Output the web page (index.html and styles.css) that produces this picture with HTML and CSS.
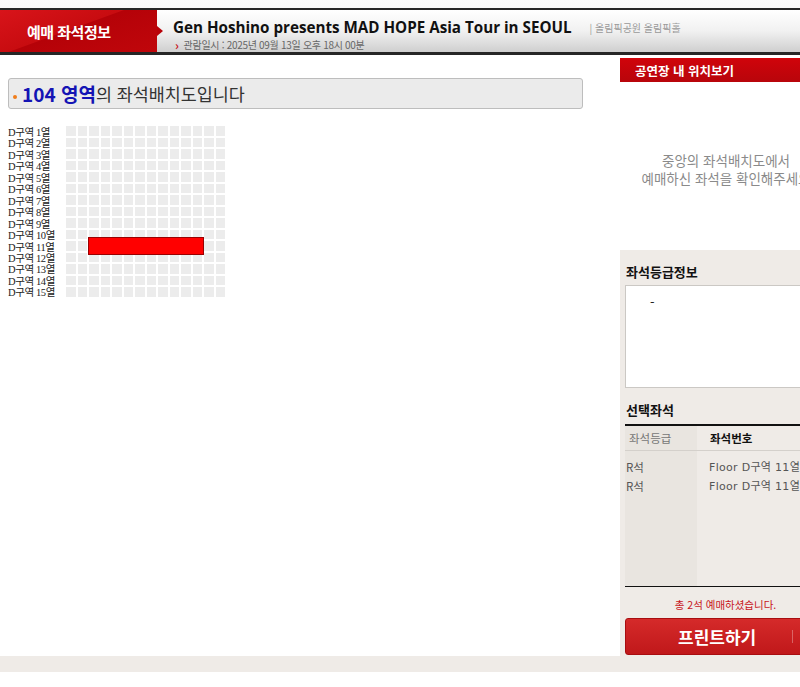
FILE: index.html
```html
<!DOCTYPE html>
<html lang="ko">
<head>
  <meta charset="UTF-8">
  <title>예매 좌석정보</title>
  <link rel="stylesheet" href="styles.css">
</head>
<body>
  <div class="topbar">
    <div class="header">
      <div class="header-tab">예매 좌석정보</div>
      <div class="header-info">
        <div class="show-title">
          <strong>Gen Hoshino presents MAD HOPE Asia Tour in SEOUL</strong>
          <span class="venue">| 올림픽공원 올림픽홀</span>
        </div>
        <div class="show-date"><span class="chev">&rsaquo;</span>관람일시 : 2025년 09월 13일 오후 18시 00분</div>
      </div>
    </div>
  </div>

  <div class="page">
    <!-- seat map -->
    <div class="map-area">
      <div class="area-title">
        <span class="dot"></span><span class="area-no">104 영역</span>의 좌석배치도입니다
      </div>

      <div class="seat-wrap">
        <div class="row-labels" id="rowLabels"></div>
        <div class="seat-grid" id="seatGrid">
          <div class="seat-pick"></div>
        </div>
      </div>
    </div>

    <!-- right panel -->
    <aside class="side">
      <div class="side-tab">공연장 내 위치보기</div>
      <div class="side-guide">
        <p>중앙의 좌석배치도에서</p>
        <p>예매하신 좌석을 확인해주세요</p>
      </div>
      <div class="side-body">
        <h3>좌석등급정보</h3>
        <div class="grade-box">-</div>

        <h3 class="picked-title">선택좌석</h3>
        <div class="seat-table">
          <div class="col col-grade">
            <div class="th">좌석등급</div>
            <div class="td">R석</div>
            <div class="td">R석</div>
          </div>
          <div class="col col-no">
            <div class="th">좌석번호</div>
            <div class="td">Floor D구역 11열</div>
            <div class="td">Floor D구역 11열</div>
          </div>
        </div>
        <div class="total">총 2석 예매하셨습니다.</div>
        <div class="print-btn">
          <span class="print-label">프린트하기</span>
          <span class="btn-sep"></span>
          <span class="btn-close">X</span>
        </div>
      </div>
    </aside>
  </div>
  <div class="footer-band"></div>

  <script>
    const labels = document.getElementById('rowLabels');
    const grid = document.getElementById('seatGrid');

    for (let r = 1; r <= 15; r++) {
      const label = document.createElement('div');
      label.textContent = 'D구역 ' + r + '열';
      labels.appendChild(label);
      for (let c = 0; c < 14; c++) {
        const seat = document.createElement('span');
        seat.className = 'seat';
        grid.appendChild(seat);
      }
    }
  </script>
</body>
</html>
```

FILE: styles.css
```css
* {
  box-sizing: border-box;
}

html, body {
  overflow: hidden;
}

body {
  margin: 0;
  width: 800px;
  height: 687px;
  background: #fff;
  font-family: "Noto Sans CJK KR", "Noto Sans", sans-serif;
  color: #222;
}

/* header */
.topbar {
  padding-top: 8px;
  background: linear-gradient(to bottom, #fafafa, #f0f0f0);
}

.header {
  display: flex;
  height: 47px;
  border-top: 2px solid #262626;
  border-bottom: 3px solid #262626;
}

.header-tab {
  position: relative;
  width: 157px;
  flex-shrink: 0;
  padding-left: 27px;
  display: flex;
  align-items: center;
  color: #fff;
  font-weight: bold;
  font-size: 15px;
  letter-spacing: -0.5px;
  background: linear-gradient(160deg, #d8141a 0%, #c80c10 45%, #b50208 46%, #c0060b 100%);
}

.header-tab::after {
  content: "";
  position: absolute;
  right: -6px;
  top: 16px;
  border-left: 6px solid #b80208;
  border-top: 5px solid transparent;
  border-bottom: 5px solid transparent;
  z-index: 1;
}

.header-info {
  flex: 1;
  padding: 6px 0 0 16px;
  background: linear-gradient(to bottom, #ffffff 0%, #f1f1f1 50%, #cfcfcf 100%);
  white-space: nowrap;
}

.show-title {
  display: flex;
  align-items: center;
  height: 22px;
}

.show-title strong {
  font-family: "Open Sans", "Noto Sans CJK KR", sans-serif;
  font-size: 15.2px;
  font-weight: bold;
  color: #111;
}

.venue {
  margin-left: 18px;
  font-size: 10px;
  color: #999;
}

.show-date {
  display: flex;
  align-items: center;
  height: 14px;
  padding-left: 2px;
  font-size: 10px;
  line-height: 12px;
  color: #666;
  letter-spacing: -0.3px;
}

.chev {
  color: #c8151b;
  font-weight: bold;
  font-size: 12px;
  line-height: 12px;
  margin-right: 5px;
}

/* main */
.page {
  display: flex;
  height: 601px;
}

.map-area {
  width: 620px;
  flex-shrink: 0;
}

.area-title {
  margin: 23px 0 0 8px;
  width: 575px;
  height: 31px;
  padding-left: 4px;
  display: flex;
  align-items: center;
  border: 1px solid #bdbdbd;
  border-radius: 3px;
  background: #ebebeb;
  font-size: 17.4px;
  color: #333;
}

.dot {
  width: 4px;
  height: 4px;
  margin: 6px 5px 0 0;
  border-radius: 50%;
  background: #f07d1a;
}

.area-no {
  color: #1414b4;
  font-weight: bold;
  font-size: 19px;
}

.seat-wrap {
  display: flex;
  margin-top: 17px;
}

.row-labels {
  width: 66px;
  padding: 1px 0 0 8px;
  font-family: "Liberation Serif", "Noto Sans CJK KR", serif;
  font-size: 10.5px;
  line-height: 11.45px;
  color: #222;
  letter-spacing: -0.4px;
}

.seat-grid {
  position: relative;
  display: grid;
  grid-template-columns: repeat(14, 9.5px);
  grid-auto-rows: 9.5px;
  gap: 2px;
}

.seat {
  background: #ececec;
}

.seat-pick {
  position: absolute;
  left: 22px;
  top: 111px;
  width: 116px;
  height: 18px;
  background: #ff0000;
  border: 1px solid #9a0000;
}

/* right side */
.side {
  width: 212px;
  flex-shrink: 0;
  margin-top: 3px;
  display: flex;
  flex-direction: column;
}

.side-tab {
  height: 24px;
  padding-left: 15px;
  display: flex;
  align-items: center;
  color: #fff;
  font-weight: bold;
  font-size: 12.5px;
  background: linear-gradient(to bottom, #d0040b, #b8050b);
}

.side-guide {
  height: 168px;
  padding-top: 5px;
  display: flex;
  flex-direction: column;
  align-items: center;
  justify-content: center;
  font-size: 13.5px;
  line-height: 18px;
  color: #8a8a8a;
  white-space: nowrap;
}

.side-guide p {
  margin: 0;
}

.side-body {
  flex: 1;
  padding: 14px 6px 0 5px;
  background: #efebe7;
}

.side-body h3 {
  margin: 0 0 5px 1px;
  font-size: 13px;
  line-height: 16px;
  color: #111;
}

.grade-box {
  height: 103px;
  padding: 6px 24px;
  background: #fff;
  border: 1px solid #cbc8c4;
  font-size: 13px;
}

.side-body .picked-title {
  margin-top: 14px;
  margin-bottom: 6px;
}

.seat-table {
  display: flex;
  height: 163px;
  border-top: 2px solid #111;
  border-bottom: 1px solid #111;
  font-size: 11.5px;
}

.col-grade {
  width: 72px;
  background: #e9e5e0;
}

.col-no {
  flex: 1;
}

.th {
  height: 25px;
  line-height: 25px;
  border-bottom: 1px solid #d4d0cb;
  white-space: nowrap;
}

.col-grade .th {
  padding-left: 4px;
  color: #777;
}

.col-no .th {
  padding-left: 13px;
  color: #111;
  font-weight: bold;
}

.td {
  line-height: 19px;
  color: #555;
  white-space: nowrap;
}

.th + .td {
  margin-top: 7px;
}

.col-grade .td {
  padding-left: 1px;
}

.col-no .td {
  padding-left: 12px;
  font-family: "DejaVu Sans", "Noto Sans CJK KR", sans-serif;
  font-size: 11px;
  letter-spacing: 0.3px;
}

.total {
  margin-top: 10px;
  line-height: 16px;
  text-align: center;
  font-size: 10.5px;
  color: #c8151b;
}

.print-btn {
  margin-top: 5px;
  height: 37px;
  display: flex;
  align-items: center;
  border-radius: 3px;
  border: 1px solid #a80d10;
  background: linear-gradient(to bottom, #d52a2a, #c0181a);
  color: #fff;
  font-weight: bold;
  white-space: nowrap;
}

.print-label {
  padding-left: 52px;
  font-size: 17px;
}

.btn-sep {
  width: 1px;
  height: 13px;
  margin: 0 11px 0 36px;
  background: rgba(255, 255, 255, 0.3);
}

.btn-close {
  font-size: 18px;
  font-weight: normal;
}

.footer-band {
  height: 16px;
  background: #efebe7;
}
```
